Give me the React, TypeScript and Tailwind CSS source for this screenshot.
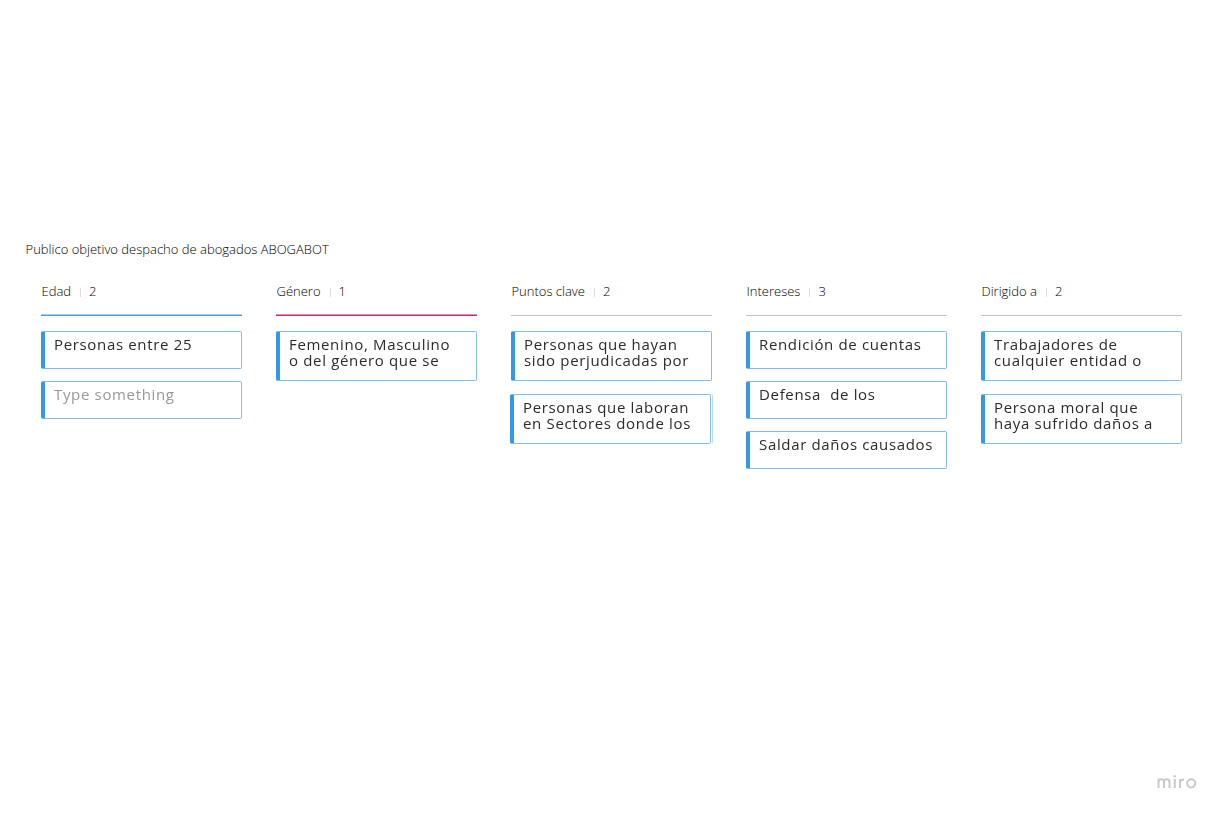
type Card = { lines: string[]; placeholder?: boolean; dragged?: boolean };
type Column = { title: string; count: number; rule: string; cards: Card[] };

const grayRule = 'h-px bg-[#c3c4c8]';

const columns: Column[] = [
  {
    title: 'Edad',
    count: 2,
    rule: '-mt-px h-0.5 border-t border-[#9fd0f5] bg-[#4a9fe0]',
    cards: [{ lines: ['Personas entre 25'] }, { lines: ['Type something'], placeholder: true }],
  },
  {
    title: 'Género',
    count: 1,
    rule: '-mt-px h-0.5 border-t border-[#e58bb0] bg-[#cf2c6b]',
    cards: [{ lines: ['Femenino, Masculino', 'o del género que se'] }],
  },
  {
    title: 'Puntos clave',
    count: 2,
    rule: grayRule,
    cards: [
      { lines: ['Personas que hayan', 'sido perjudicadas por'] },
      { lines: ['Personas que laboran', 'en Sectores donde los'], dragged: true },
    ],
  },
  {
    title: 'Intereses',
    count: 3,
    rule: grayRule,
    cards: [
      { lines: ['Rendición de cuentas'] },
      { lines: ['Defensa  de los'] },
      { lines: ['Saldar daños causados'] },
    ],
  },
  {
    title: 'Dirigido a',
    count: 2,
    rule: grayRule,
    cards: [
      { lines: ['Trabajadores de', 'cualquier entidad o'] },
      { lines: ['Persona moral que', 'haya sufrido daños a'] },
    ],
  },
];

function CardFace({ card }: { card: Card }) {
  return (
    <div
      className={`w-full rounded-[2px] border border-l-4 border-[#82bdec] border-l-[#3598e6] bg-white pt-1 pl-[9px] text-[15px] leading-4 tracking-[0.66px] whitespace-pre ${
        card.lines.length > 1 ? 'h-[50px]' : 'h-[38px]'
      } ${card.placeholder ? 'text-[#999]' : 'text-[#2b2b2b]'}`}
    >
      <p className="blur-[0.6px]">{card.lines.join('\n')}</p>
    </div>
  );
}

function CardItem({ card }: { card: Card }) {
  if (!card.dragged) return <CardFace card={card} />;
  return (
    <div className="-mr-px rounded-[2px] border-r border-[#b9dcf7]">
      <div className="mr-px -ml-px">
        <CardFace card={card} />
      </div>
    </div>
  );
}

export default function App() {
  return (
    <main className="flex h-[816px] w-[1224px] flex-col overflow-hidden bg-white font-['Open_Sans',sans-serif] text-black">
      <h1 className="mt-[240px] ml-[25.6px] text-[13px] leading-[18px] font-light">
        Publico objetivo despacho de abogados ABOGABOT
      </h1>
      <div className="mt-[25px] ml-[41px] flex gap-[34px]">
        {columns.map((column) => (
          <section key={column.title} className="w-[201px] shrink-0">
            <header className="flex h-[18px] items-center pl-[0.5px] text-[13px] font-light">
              <h2>{column.title}</h2>
              <span className="mr-2 ml-[9px] h-[9px] w-px bg-[#dedede]" />
              <span>{column.count}</span>
            </header>
            <div className="mt-[14px] flex h-4 flex-col">
              <div className={column.rule} />
            </div>
            <div className={`flex flex-col ${column.cards[0].lines.length > 1 ? 'gap-[13px]' : 'gap-3'}`}>
              {column.cards.map((card) => (
                <CardItem key={card.lines[0]} card={card} />
              ))}
            </div>
          </section>
        ))}
      </div>
      <footer className="mt-auto mr-[27px] mb-[27px] flex justify-end">
        <svg width="40" height="15" viewBox="0 0 40 15" fill="none" stroke="#c9c9d0" strokeWidth="2" aria-label="miro" role="img">
          <path d="M1.5 14V4.7M1.5 8C1.5 4.4 7 4.4 7 8V14M7 8C7 4.4 12.5 4.4 12.5 8V14M17.8 5V14M23 14V5M23 8.5Q23.5 5.6 27 5.6" />
          <circle cx="34.2" cy="9.3" r="4.1" />
          <circle cx="17.8" cy="2.2" r="1.2" fill="#c9c9d0" stroke="none" />
        </svg>
      </footer>
    </main>
  );
}
